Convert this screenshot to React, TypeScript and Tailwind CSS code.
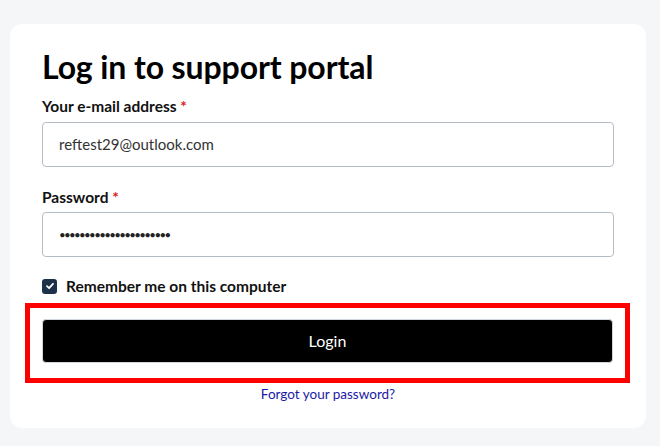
import React from "react";

export default function App() {
  return (
    <div
      className="w-[660px] h-[446px] bg-[#f5f6f8] pt-[24px] pl-[10px] overflow-hidden"
      style={{ fontFamily: "Lato, 'Noto Sans', sans-serif" }}
    >
      <div className="w-[636px] h-[404px] bg-white rounded-[12px] px-[32px] pt-[23px]">
        <h1 className="text-[32px] leading-[40px] font-bold text-black tracking-[-0.1px]">
          Log in to support portal
        </h1>
        <label className="block mt-[9px] text-[15.5px] leading-[20px] font-bold text-[#111]">
          Your e-mail address <span className="text-[#d22]">*</span>
        </label>
        <div className="mt-[6px] h-[45px] w-[572px] border border-[#b4bcc6] rounded-[4px] flex items-center pl-[16px] text-[15px] text-[#333]">
          reftest29@outlook.com
        </div>
        <label className="block mt-[20px] text-[15.5px] leading-[20px] font-bold text-[#111]">
          Password <span className="text-[#d22]">*</span>
        </label>
        <div className="mt-[5px] h-[45px] w-[572px] border border-[#b4bcc6] rounded-[4px] flex items-center pl-[16px] text-[11.5px] text-[#222] tracking-[-1.65px]">
          ••••••••••••••••••••••
        </div>
        <div className="mt-[19px] flex items-center gap-[9px]">
          <div className="w-[15px] h-[15px] rounded-[3px] bg-[#1d3248] flex items-center justify-center">
            <svg width="10" height="10" viewBox="0 0 10 10">
              <path d="M2 5.2 L4.1 7.2 L8 2.8" stroke="white" strokeWidth="1.8" fill="none" strokeLinecap="round" strokeLinejoin="round" />
            </svg>
          </div>
          <span className="text-[15.5px] leading-[20px] font-bold text-[#111]">Remember me on this computer</span>
        </div>
        <div className="mt-[7px] ml-[-17px] w-[605px] border-[5px] border-[#ff0000] pl-[12px] pr-[12px] pt-[11px] pb-[15px]">
          <button className="w-full h-[44px] bg-black text-white text-[16px] font-normal rounded-[4px] border border-[#cfd6de]">
            Login
          </button>
        </div>
        <div className="text-center mt-[-2px]">
          <a className="text-[13.5px] leading-[20px] text-[#1a1aa6]">Forgot your password?</a>
        </div>
      </div>
    </div>
  );
}
